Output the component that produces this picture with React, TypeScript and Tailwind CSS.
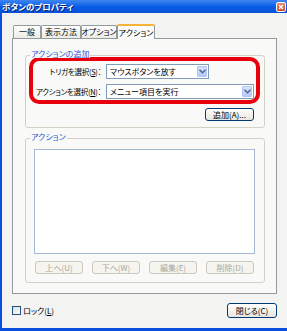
import * as React from "react";

const Chevron = () => (
    <svg width="7" height="5" viewBox="0 0 7 5">
        <path d="M0.5 0.8 L3.5 3.8 L6.5 0.8" fill="none" stroke="#4d6185" strokeWidth="1.4" />
    </svg>
);

const Select = ({ value, width }: { value: string; width: string }) => (
    <div className={`flex h-[15px] ${width} items-center border border-[#7f9db9] bg-white`}>
        <span className="flex-1 pl-[3px] text-[8px] leading-none text-black">{value}</span>
        <span className="m-[1px] flex h-[11px] w-[10px] items-center justify-center rounded-[1px] border border-[#b2c6f6] bg-gradient-to-b from-[#d6e2fd] to-[#b4c9f8]">
            <Chevron />
        </span>
    </div>
);

const XpButton = ({ label, className = "" }: { label: string; className?: string }) => (
    <button
        className={`flex items-center justify-center rounded-[3px] border border-[#003c74] bg-gradient-to-b from-white to-[#e6e5de] text-[8px] leading-none text-black ${className}`}
    >
        {label}
    </button>
);

const DisabledButton = ({ label }: { label: string }) => (
    <button className="flex h-[13px] w-[48px] items-center justify-center rounded-[3px] border border-[#cbc9bd] bg-[#f5f4ee] text-[8px] leading-none text-[#aca899]">
        {label}
    </button>
);

const Tab = ({ label, width, active }: { label: string; width: string; active?: boolean }) =>
    active ? (
        <div
            className={`relative z-10 -mb-px flex h-[15px] ${width} items-center justify-center rounded-t-[2px] border-x border-t-2 border-x-[#919b9c] border-t-[#f7b436] bg-[#fcfcfb] text-[8px] leading-none`}
        >
            {label}
        </div>
    ) : (
        <div
            className={`flex h-[13px] ${width} items-center justify-center rounded-t-[2px] border-x border-t border-[#919b9c] bg-gradient-to-b from-white to-[#ecebe5] text-[8px] leading-none`}
        >
            {label}
        </div>
    );

export default function App() {
    return (
        <div className="flex h-[331px] w-[287px] flex-col overflow-hidden whitespace-nowrap bg-[#f3f3f1] font-['Noto_Sans_CJK_JP','Noto_Sans',sans-serif] text-black [font-feature-settings:'palt']">
            {/* title bar */}
            <div className="flex h-[13px] items-center justify-between bg-gradient-to-b from-[#3d86f2] via-[#0a5de6] to-[#0751d8] pl-[2px] pr-[1px]">
                <span className="text-[8.5px] font-bold leading-none text-white [text-shadow:1px_1px_0_#0a1e6e]">
                    ボタンのプロパティ
                </span>
                <span className="flex h-[10px] w-[10px] items-center justify-center rounded-[2px] border border-white bg-gradient-to-b from-[#e98a6a] to-[#d4451d]">
                    <svg width="6" height="6" viewBox="0 0 6 6">
                        <path d="M1 1 L5 5 M5 1 L1 5" stroke="white" strokeWidth="1.4" />
                    </svg>
                </span>
            </div>

            <div className="flex flex-1 flex-col border-b-[3px] border-l-[2px] border-[#0b50dc] pl-[10px]">
                {/* tabs */}
                <div className="flex h-[25px] items-end pl-px">
                    <Tab label="一般" width="w-[28px]" />
                    <Tab label="表示方法" width="w-[40px]" />
                    <Tab label="オプション" width="w-[36px]" />
                    <Tab label="アクション" width="w-[38px]" active />
                </div>

                {/* tab panel */}
                <div className="flex h-[256px] w-[265px] flex-col border border-[#919b9c] bg-[#f9f9f7] pl-[12px]">
                    {/* group 1 */}
                    <div className="relative mt-[16px] flex h-[73px] w-[240px] flex-col rounded-[3px] border border-[#d3d1c4]">
                        <span className="absolute left-[4px] top-[-6px] bg-[#f9f9f7] px-px text-[8px] leading-none text-[#1f5ad8]">
                            アクションの追加
                        </span>
                        <div className="ml-[3px] mt-px flex h-[47px] w-[231px] flex-col gap-[5px] rounded-[10px] border-4 border-[#e8000c] pt-[3px]">
                            <div className="flex items-center">
                                <span className="flex w-[73px] justify-end pr-[5px] text-[7.5px] leading-none tracking-[-0.3px]">
                                    トリガを選択(<span className="underline underline-offset-1">S</span>)：
                                </span>
                                <Select value="マウスボタンを放す" width="w-[103px]" />
                            </div>
                            <div className="flex items-center">
                                <span className="flex w-[73px] justify-end pr-[5px] text-[7.5px] leading-none tracking-[-0.3px]">
                                    アクションを選択(<span className="underline underline-offset-1">N</span>)：
                                </span>
                                <Select value="メニュー項目を実行" width="w-[148px]" />
                            </div>
                        </div>
                        <div className="mr-[10px] mt-[4px] flex justify-end">
                            <XpButton label="追加(A)..." className="h-[13px] w-[49px]" />
                        </div>
                    </div>

                    {/* group 2 */}
                    <div className="relative mt-[10px] flex h-[145px] w-[240px] flex-col rounded-[3px] border border-[#d3d1c4]">
                        <span className="absolute left-[4px] top-[-6px] bg-[#f9f9f7] px-px text-[8px] leading-none text-[#1f5ad8]">
                            アクション
                        </span>
                        <div className="ml-[8px] mt-[10px] h-[105px] w-[221px] border border-[#a5b9d4] bg-white" />
                        <div className="ml-[9px] mt-[7px] flex gap-[9px]">
                            <DisabledButton label="上へ(U)" />
                            <DisabledButton label="下へ(W)" />
                            <DisabledButton label="編集(E)" />
                            <DisabledButton label="削除(D)" />
                        </div>
                    </div>
                </div>

                {/* footer */}
                <div className="mt-[9px] flex w-[265px] items-center justify-between">
                    <label className="flex items-center gap-[2px] text-[8px] leading-none">
                        <span className="h-[9px] w-[9px] border border-[#1c5180] bg-gradient-to-br from-[#dcdcd6] to-white" />
                        <span>ロック(<span className="underline underline-offset-1">L</span>)</span>
                    </label>
                    <XpButton label="閉じる(C)" className="h-[15px] w-[50px]" />
                </div>
            </div>
        </div>
    );
}
